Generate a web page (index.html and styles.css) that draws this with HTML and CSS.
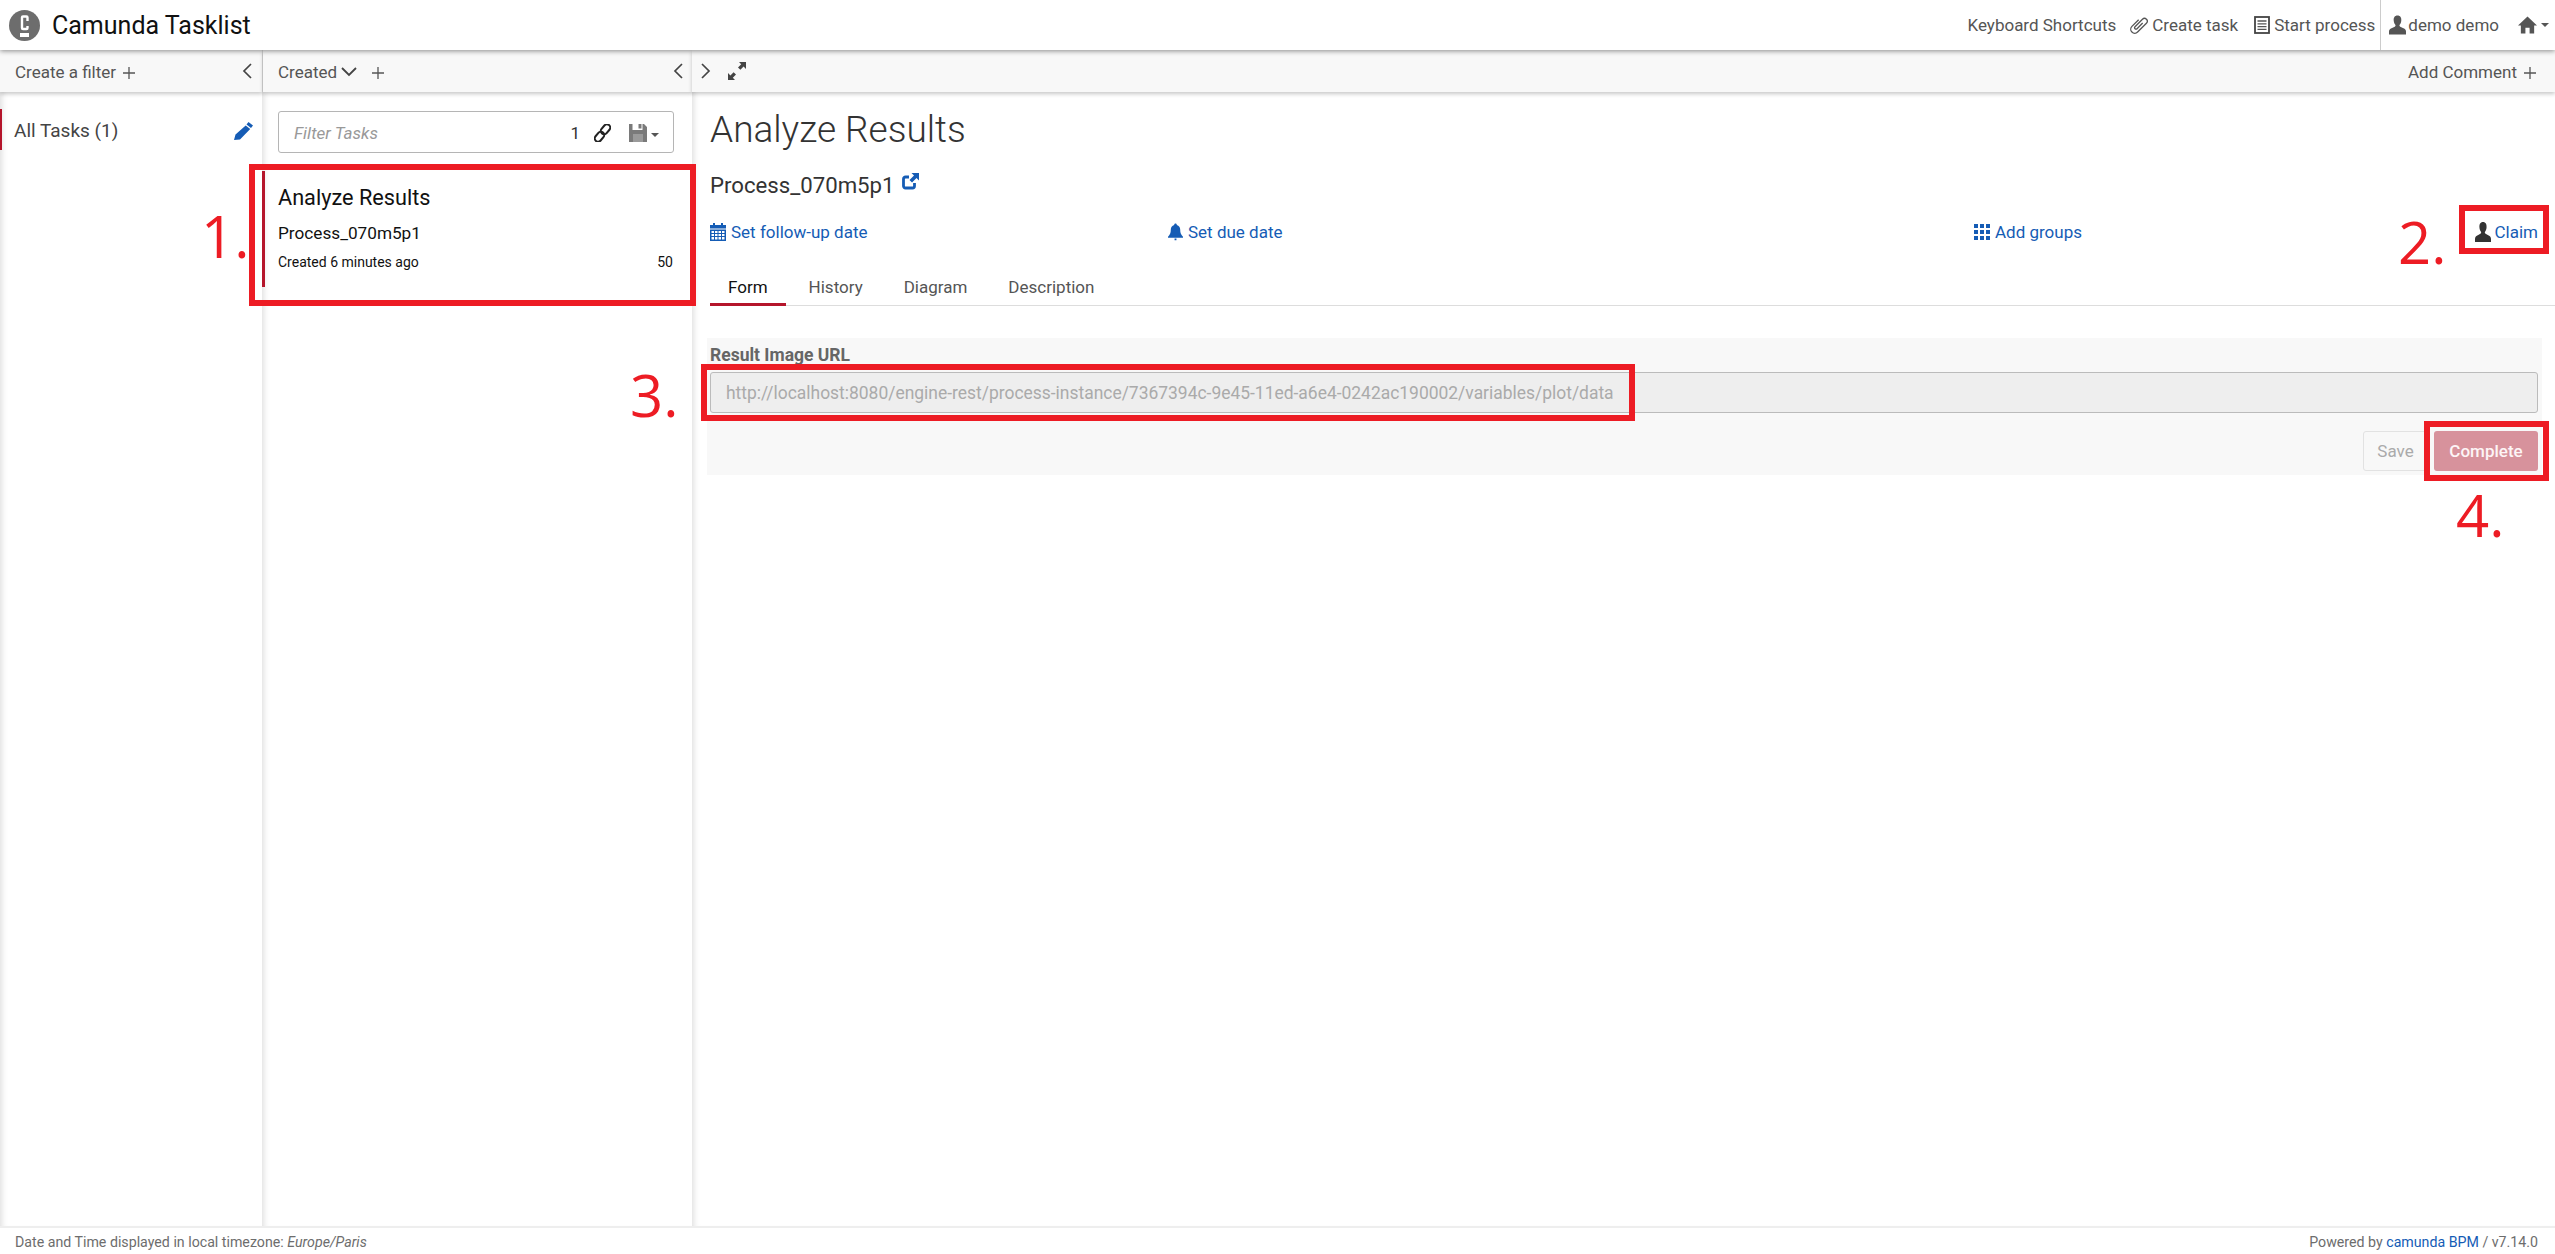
FILE: index.html
```html
<!DOCTYPE html>
<html lang="en">
<head>
    <meta charset="UTF-8">
    <title>Camunda Tasklist</title>
    <link rel="stylesheet" href="styles.css">
</head>
<body>
    <header class="topbar">
        <div class="brand">
            <svg class="logo" viewBox="0 0 31 31" width="31" height="31"><circle cx="15.5" cy="15.5" r="15.5" fill="#6d6d6d"/><path d="M18.500 11V7.500a1 1 0 0 0-1-1h-3.500a1 1 0 0 0-1 1V18a1 1 0 0 0 1 1h3.500a1 1 0 0 0 1-1v-2" fill="none" stroke="#fff" stroke-width="2.400"/><rect x="11" y="23" width="9" height="4" fill="#fff"/></svg>
            <span class="brand-name">Camunda Tasklist</span>
        </div>
        <nav class="topnav">
            <a class="nav-item keyboard">Keyboard Shortcuts</a>
            <a class="nav-item create">
                <svg viewBox="0 0 18 18" width="18" height="18"><g transform="rotate(45 9 9)"><path d="M5 5.500V15a4 4 0 0 0 8 0V2.500a2.800 2.800 0 0 0-5.600 0V13a1.400 1.400 0 0 0 2.800 0V5" fill="none" stroke="#555" stroke-width="1.300"/></g></svg>
                Create task
            </a>
            <a class="nav-item start">
                <svg viewBox="0 0 16 18" width="16" height="18"><rect x="1" y="1" width="14" height="16" fill="none" stroke="#444" stroke-width="1.800"/><path d="M3.500 5h9M3.500 7.800h9M3.500 10.600h9M3.500 13.400h9" stroke="#555" stroke-width="1.300"/></svg>
                Start process
            </a>
            <span class="nav-divider"></span>
            <a class="nav-item user">
                <svg viewBox="0 0 18 20" width="17" height="20"><path d="M9 0c3 0 4.300 2.400 4 5.400-.2 2-.9 3.400-1.700 4.400-.5.7-.2 1.600.6 2l4 2c1.300.7 2.100 1.700 2.100 3.200V20H0v-3c0-1.500.8-2.500 2.100-3.200l4-2c.8-.4 1.100-1.300.6-2C5.900 8.800 5.200 7.400 5 5.400 4.700 2.400 6 0 9 0z" fill="#555"/></svg>
                demo demo
            </a>
            <a class="nav-item home">
                <svg viewBox="0 0 20 20" width="19" height="20"><path d="M10 1 20 10.500h-3V19h-4.800v-6H7.800v6H3v-8.500H0z" fill="#555"/></svg>
                <span class="caret"></span>
            </a>
        </nav>
    </header>

    <div class="workspace">
        <section class="column filters">
            <div class="toolbar">
                <span>Create a filter</span>
                <svg class="plus" viewBox="0 0 12 12" width="12" height="12"><path d="M6 0v12M0 6h12" stroke="#555" stroke-width="1.300"/></svg>
                <svg class="chevron push" viewBox="0 0 10 16" width="10" height="16"><path d="M9 1 2 8l7 7" fill="none" stroke="#444" stroke-width="1.700"/></svg>
            </div>
            <div class="filter-item">
                <span>All Tasks (1)</span>
                <svg viewBox="0 0 20 18" width="20" height="18"><path d="M14.500 0 19 3.500 17 6l-4.500-3.500zM11.700 3.500l4.500 3.500L6 17.500 0 18l1.500-5.500z" fill="#155cb5"/></svg>
            </div>
        </section>

        <section class="column tasks">
            <div class="toolbar">
                <span>Created</span>
                <svg class="sort" viewBox="0 0 16 10" width="16" height="10"><path d="M1 1l7 7 7-7" fill="none" stroke="#444" stroke-width="1.800"/></svg>
                <svg class="plus wide" viewBox="0 0 12 12" width="12" height="12"><path d="M6 0v12M0 6h12" stroke="#555" stroke-width="1.300"/></svg>
                <svg class="chevron push" viewBox="0 0 10 16" width="10" height="16"><path d="M9 1 2 8l7 7" fill="none" stroke="#444" stroke-width="1.700"/></svg>
            </div>
            <div class="search">
                <span class="search-hint">Filter Tasks</span>
                <span class="search-count">1</span>
                <svg viewBox="0 0 17 18" width="17" height="18"><g fill="none" stroke="#222" stroke-width="2"><rect x="8.200" y="-.2" width="6.600" height="11" rx="3.300" transform="rotate(40 11.500 5.300)"/><rect x="2.200" y="7.200" width="6.600" height="11" rx="3.300" transform="rotate(40 5.500 12.700)"/></g></svg>
                <svg class="floppy" viewBox="0 0 18 18" width="18" height="18"><path d="M0 0h3.500v6h10V0H15l3 3v15H0zM9.500 0h3v4.500h-3z" fill="#7a7a7a"/><rect x="4" y="10" width="10" height="8" fill="#9a9a9a"/></svg>
                <span class="caret"></span>
            </div>
            <article class="task-card">
                <h3>Analyze Results</h3>
                <div class="task-process">Process_070m5p1</div>
                <div class="task-meta"><span>Created 6 minutes ago</span><span>50</span></div>
            </article>
        </section>

        <section class="column detail">
            <div class="toolbar">
                <svg class="chevron" viewBox="0 0 10 16" width="10" height="16"><path d="M1 1l7 7-7 7" fill="none" stroke="#444" stroke-width="1.700"/></svg>
                <svg class="expand" viewBox="0 0 18 18" width="18" height="18"><path d="M11 0h7v7l-2.400-2.400-3.200 3.200-2.400-2.400 3.200-3.200zM7 18H0v-7l2.400 2.400 3.200-3.200 2.400 2.400-3.200 3.200z" fill="#444"/></svg>
                <span class="push">Add Comment</span>
                <svg class="plus" viewBox="0 0 12 12" width="12" height="12"><path d="M6 0v12M0 6h12" stroke="#555" stroke-width="1.300"/></svg>
            </div>
            <div class="detail-body">
                <h1>Analyze Results</h1>
                <div class="process-name">
                    <span>Process_070m5p1</span>
                    <svg viewBox="0 0 17 17" width="17" height="17"><path d="M12.500 10v3a2 2 0 0 1-2 2H3.500a2 2 0 0 1-2-2V6a2 2 0 0 1 2-2H7" fill="none" stroke="#155cb5" stroke-width="2.800"/><path d="M9.500 0H17v7.500l-2.500-2.500-4.500 4.500-2.500-2.500L12 2.500z" fill="#155cb5"/></svg>
                </div>
                <div class="actions">
                    <a class="action">
                        <svg viewBox="0 0 16 18" width="16" height="18"><path d="M0 2h3V0h2v2h6V0h2v2h3v3.500H0zM0 6.500h16V18H0zM1.500 8v2h2.500V8zM5 8v2h2.500V8zM8.500 8v2H11V8zM12 8v2h2.500V8zM1.500 11v2h2.500v-2zM5 11v2h2.500v-2zM8.500 11v2H11v-2zM12 11v2h2.500v-2zM1.500 14v2.500h2.500V14zM5 14v2.500h2.500V14zM8.500 14v2.500H11V14zM12 14v2.500h2.500V14z" fill="#155cb5" fill-rule="evenodd"/></svg>
                        Set follow-up date
                    </a>
                    <a class="action">
                        <svg viewBox="0 0 16 18" width="15" height="18"><path d="M8 0c.9 0 1.400.6 1.400 1.400 2.400.6 3.600 2.600 3.600 5 0 4 1 5.600 3 7.600v1H0v-1c2-2 3-3.600 3-7.600 0-2.400 1.200-4.400 3.600-5C6.600.6 7.100 0 8 0zM7 16h2v1.800H7z" fill="#155cb5"/></svg>
                        Set due date
                    </a>
                    <a class="action">
                        <svg viewBox="0 0 16 16" width="16" height="16"><path d="M0 0h4v4H0zM6 0h4v4H6zM12 0h4v4h-4zM0 6h4v4H0zM6 6h4v4H6zM12 6h4v4h-4zM0 12h4v4H0zM6 12h4v4H6zM12 12h4v4h-4z" fill="#155cb5"/></svg>
                        Add groups
                    </a>
                    <a class="action claim">
                        <svg viewBox="0 0 18 20" width="16" height="20" preserveAspectRatio="none"><path d="M9 0c3 0 4.300 2.400 4 5.400-.2 2-.9 3.400-1.700 4.400-.5.7-.2 1.600.6 2l4 2c1.300.7 2.100 1.700 2.100 3.200V20H0v-3c0-1.500.8-2.500 2.100-3.200l4-2c.8-.4 1.100-1.300.6-2C5.900 8.800 5.200 7.400 5 5.400 4.700 2.400 6 0 9 0z" fill="#333"/></svg>
                        Claim
                    </a>
                </div>
                <div class="tabs">
                    <a class="tab active">Form</a>
                    <a class="tab">History</a>
                    <a class="tab">Diagram</a>
                    <a class="tab">Description</a>
                </div>
                <form class="task-form">
                    <label class="field-label">Result Image URL</label>
                    <div class="field-input">http://localhost:8080/engine-rest/process-instance/7367394c-9e45-11ed-a6e4-0242ac190002/variables/plot/data</div>
                    <div class="form-buttons">
                        <span class="btn btn-save">Save</span>
                        <span class="btn btn-complete">Complete</span>
                    </div>
                </form>
            </div>
        </section>
    </div>

    <footer class="footer">
        <span>Date and Time displayed in local timezone: <em>Europe/Paris</em></span>
        <span>Powered by <a class="footer-link">camunda BPM</a> / v7.14.0</span>
    </footer>

    <!-- red marks drawn over the shot -->
    <div class="mark mark-task"></div>
    <div class="mark mark-claim"></div>
    <div class="mark mark-url"></div>
    <div class="mark mark-complete"></div>
    <span class="mark-num num-1">1.</span>
    <span class="mark-num num-2">2.</span>
    <span class="mark-num num-3">3.</span>
    <span class="mark-num num-4">4.</span>
</body>
</html>
```

FILE: styles.css
```css
* {
    box-sizing: border-box;
}

html, body {
    height: 100%;
}

body {
    position: relative;
    display: flex;
    flex-direction: column;
    margin: 0;
    overflow: hidden;
    background-color: #fff;
    color: #333;
    font-family: Roboto, "Liberation Sans", sans-serif;
    font-size: 17px;
}

svg {
    flex: none;
}

/* top bar */
.topbar {
    position: relative;
    z-index: 3;
    display: flex;
    align-items: center;
    justify-content: space-between;
    height: 50px;
    padding: 0 6px 0 9px;
    background-color: #fff;
    box-shadow: 0 1px 5px rgba(0, 0, 0, 0.45);
}

.brand {
    display: flex;
    align-items: center;
}

.brand-name {
    margin-left: 12px;
    color: #111;
    font-size: 25px;
}

.topnav {
    display: flex;
    align-items: center;
    height: 100%;
    color: #555;
    font-size: 17px;
}

.nav-item {
    display: flex;
    align-items: center;
    gap: 4px;
}

.create {
    margin-left: 14px;
}

.start {
    margin-left: 16px;
}

.nav-divider {
    width: 1px;
    height: 100%;
    margin: 0 8px 0 5px;
    background-color: #ccc;
}

.user {
    gap: 2px;
}

.home {
    margin-left: 19px;
    gap: 4px;
}

.caret {
    width: 0;
    height: 0;
    border-top: 4px solid #555;
    border-left: 4px solid transparent;
    border-right: 4px solid transparent;
}

/* columns */
.workspace {
    flex: 1;
    display: flex;
    min-height: 0;
}

.column {
    display: flex;
    flex-direction: column;
    box-shadow: inset 7px 0 7px -6px rgba(0, 0, 0, 0.16);
}

.filters {
    width: 262px;
}

.tasks {
    width: 430px;
}

.detail {
    flex: 1;
}

.toolbar {
    display: flex;
    align-items: center;
    flex: none;
    height: 42px;
    padding-top: 2px;
    background-color: #f8f8f8;
    box-shadow: 0 2px 4px rgba(0, 0, 0, 0.22);
    color: #555;
    font-size: 17px;
}

.filters .toolbar {
    padding-left: 15px;
    padding-right: 10px;
}

.tasks .toolbar {
    margin-left: 1px;
    padding-left: 15px;
    padding-right: 9px;
}

.detail .toolbar {
    padding-left: 9px;
    padding-right: 19px;
}

.plus {
    margin-left: 7px;
    margin-top: 2px;
}

.plus.wide {
    margin-left: 15px;
}

.sort {
    margin-left: 4px;
}

.expand {
    margin-left: 17px;
    margin-top: -3px;
}

.chevron {
    margin-top: -3px;
}

.push {
    margin-left: auto;
}

.filter-item {
    display: flex;
    align-items: center;
    justify-content: space-between;
    height: 41px;
    margin-top: 17px;
    padding: 2px 8px 0 14px;
    border-left: 2px solid #b5152b;
    font-size: 19px;
    color: #444;
}

.filter-item span {
    margin-left: -2px;
}

.search {
    display: flex;
    align-items: center;
    height: 42px;
    margin: 19px 18px 0 16px;
    padding: 2px 14px 0 15px;
    border: 1px solid #b5b5b5;
    border-radius: 3px;
    color: #333;
}

.search-hint {
    flex: 1;
    color: #999;
    font-style: italic;
}

.search-count {
    margin-right: 14px;
}

.floppy {
    margin-left: 18px;
}

.search .caret {
    margin-left: 4px;
    margin-top: 4px;
}

.task-card {
    height: 116px;
    margin-top: 18px;
    padding: 12px 19px 0 13px;
    border-left: 3px solid #b5152b;
    color: #111;
}

.task-card h3 {
    margin: 0;
    font-size: 21.700px;
    font-weight: 400;
    line-height: 30px;
}

.task-process {
    margin-top: 10px;
    font-size: 17.200px;
}

.task-meta {
    display: flex;
    justify-content: space-between;
    margin-top: 11px;
    font-size: 14px;
}

/* detail */
.detail-body {
    padding: 0 17px 0 18px;
}

.detail-body h1 {
    margin: 14px 0 0;
    font-size: 37px;
    font-weight: 300;
    line-height: 48px;
}

.process-name {
    display: flex;
    align-items: flex-start;
    gap: 7px;
    margin-top: 18px;
    font-size: 22.200px;
    line-height: 26px;
}

.process-name svg {
    margin-top: 1px;
}

.actions {
    display: grid;
    grid-template-columns: 458px 806px 1fr auto;
    margin-top: 22px;
    color: #155cb5;
}

.action {
    display: flex;
    align-items: center;
    gap: 5px;
    height: 24px;
}

.claim {
    gap: 4px;
}

.tabs {
    display: flex;
    gap: 5px;
    height: 49px;
    margin-top: 13px;
    margin-right: -17px;
    border-bottom: 1px solid #ddd;
    color: #555;
}

.tab {
    height: 49px;
    padding: 20px 18px 0;
    line-height: 20px;
}

.tab.active {
    border-bottom: 3px solid #b5152b;
    color: #111;
}

.task-form {
    height: 137px;
    margin: 32px -4px 0 -3px;
    padding: 7px 4px 0 3px;
    background-color: #f8f8f8;
}

.field-label {
    display: block;
    color: #666;
    font-size: 17.500px;
    font-weight: 700;
    line-height: 20px;
}

.field-input {
    display: flex;
    align-items: center;
    height: 41px;
    margin-top: 7px;
    padding: 0 15px;
    background-color: #eee;
    border: 1px solid #bbb;
    border-radius: 3px;
    color: #aaa;
    font-size: 17.450px;
}

.form-buttons {
    display: flex;
    justify-content: flex-end;
    gap: 6px;
    margin-top: 18px;
}

.btn {
    display: flex;
    align-items: center;
    justify-content: center;
    height: 40px;
    border-radius: 3px;
    font-size: 17px;
}

.btn-save {
    width: 65px;
    border: 1px solid #e2e2e2;
    color: #aaa;
}

.btn-complete {
    width: 104px;
    background-color: #d7929c;
    color: #fdf5f6;
    font-weight: 500;
}

/* footer */
.footer {
    display: flex;
    justify-content: space-between;
    align-items: center;
    flex: none;
    height: 28px;
    padding: 2px 17px 0 15px;
    border-top: 2px solid #eee;
    color: #6d6d6d;
    font-size: 14.200px;
}

.footer-link {
    color: #155cb5;
}

/* annotations */
.mark {
    position: absolute;
    z-index: 5;
    border: 6px solid #ed1c24;
}

.mark-task {
    left: 249px;
    top: 164px;
    width: 447px;
    height: 142px;
}

.mark-claim {
    left: 2459px;
    top: 205px;
    width: 90px;
    height: 49px;
}

.mark-url {
    left: 701px;
    top: 364px;
    width: 934px;
    height: 57px;
}

.mark-complete {
    left: 2424px;
    top: 421px;
    width: 125px;
    height: 60px;
}

.mark-num {
    position: absolute;
    z-index: 5;
    color: #ed1c24;
    font-family: "Open Sans", sans-serif;
    font-size: 58px;
    line-height: 58px;
}

.num-1 {
    left: 201px;
    top: 207px;
}

.num-2 {
    left: 2398px;
    top: 213px;
}

.num-3 {
    left: 630px;
    top: 366px;
}

.num-4 {
    left: 2456px;
    top: 486px;
}
```
